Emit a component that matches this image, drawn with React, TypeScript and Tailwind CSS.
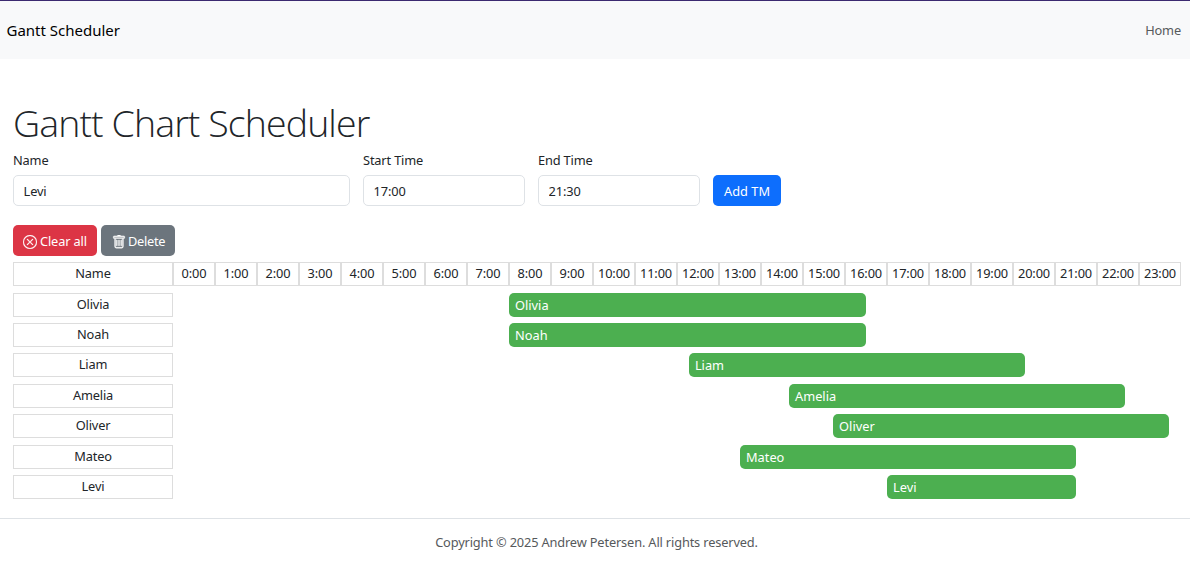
import { BsTrash, BsXCircle } from "react-icons/bs";

type Shift = { name: string; start: number; minutes: number };

const shifts: Shift[] = [
  { name: "Olivia", start: 480, minutes: 510 },
  { name: "Noah", start: 480, minutes: 510 },
  { name: "Liam", start: 737, minutes: 480 },
  { name: "Amelia", start: 880, minutes: 480 },
  { name: "Oliver", start: 943, minutes: 480 },
  { name: "Mateo", start: 810, minutes: 480 },
  { name: "Levi", start: 1020, minutes: 270 },
];

const PX_PER_MINUTE = 0.7;
const hours = Array.from({ length: 24 }, (_, h) => `${h}:00`);

function Field({ label, value, className }: { label: string; value: string; className: string }) {
  return (
    <label className={`flex flex-col ${className}`}>
      <span className="mb-[5px] h-[19px] leading-[19px]">{label}</span>
      <input
        defaultValue={value}
        className="h-[31px] w-full rounded-[5px] border border-[#dee2e6] bg-white px-[9.6px] pt-px outline-none"
      />
    </label>
  );
}

export default function App() {
  return (
    <div className="h-[587px] overflow-hidden bg-white font-['Noto_Sans','Open_Sans',sans-serif] text-[12.8px] leading-[19.2px] tracking-[-0.15px] text-[#212529]">
      <nav className="flex h-[59px] items-center justify-between border-t border-[#3b2a70] bg-[#f8f9fa] pl-[6.5px] pr-[9px] pt-[2px]">
        <a className="text-[15px] tracking-[0px] text-black">Gantt Scheduler</a>
        <a className="text-[#56595c]">Home</a>
      </nav>

      <main className="px-[13px] pt-[41px]">
        <h1 className="h-[46px] whitespace-nowrap font-['Open_Sans'] text-[37.5px] font-light leading-[46px] tracking-[-0.9px]">
          Gantt Chart Scheduler
        </h1>

        <form className="mt-[5px] flex items-end gap-[13px]">
          <Field label="Name" value="Levi" className="w-[337px]" />
          <Field label="Start Time" value="17:00" className="w-[162px]" />
          <Field label="End Time" value="21:30" className="w-[162px]" />
          <button type="button" className="h-[31px] w-[68px] rounded-[5px] bg-[#0d6efd] pt-[2px] tracking-[0px] text-white">
            Add TM
          </button>
        </form>

        <div className="mt-[19px] flex gap-[4px] text-white">
          <button type="button" className="flex h-[31px] w-[84px] items-center gap-[3px] rounded-[5px] bg-[#dc3545] pl-[10px] pt-[2px]">
            <BsXCircle className="size-[14px] shrink-0" strokeWidth={0.3} />
            <span className="whitespace-nowrap">Clear all</span>
          </button>
          <button type="button" className="flex h-[31px] w-[74px] items-center gap-[2px] rounded-[5px] bg-[#6c757d] pl-[11px] pt-[2px]">
            <BsTrash className="size-[14px] shrink-0" strokeWidth={0.5} />
            <span className="whitespace-nowrap tracking-[-0.3px]">Delete</span>
          </button>
        </div>

        <section className="mt-[6.2px] flex flex-col gap-[6.4px]">
          <div className="flex h-[24px] text-center leading-[21px]">
            <div className="w-[160px] shrink-0 border border-[#dddddd]">Name</div>
            {hours.map((h) => (
              <div key={h} className="w-[42px] shrink-0 border border-[#dddddd]">
                {h}
              </div>
            ))}
          </div>
          {shifts.map((s) => (
            <div key={s.name} className="flex h-[24px]">
              <div className="w-[160px] shrink-0 border border-[#dddddd] text-center leading-[21px]">{s.name}</div>
              <div
                className="h-[24px] shrink-0 rounded-[5px] bg-[#4caf50] pl-[6px] pt-px leading-[23.5px] tracking-[0px] text-white"
                style={{ marginLeft: s.start * PX_PER_MINUTE, width: s.minutes * PX_PER_MINUTE }}
              >
                {s.name}
              </div>
            </div>
          ))}
        </section>
      </main>

      <footer className="mt-[19px] border-t border-[#dee2e6] pl-[3px] pt-[14px] text-center text-[#56595c]">
        Copyright © 2025 Andrew Petersen. All rights reserved.
      </footer>
    </div>
  );
}
